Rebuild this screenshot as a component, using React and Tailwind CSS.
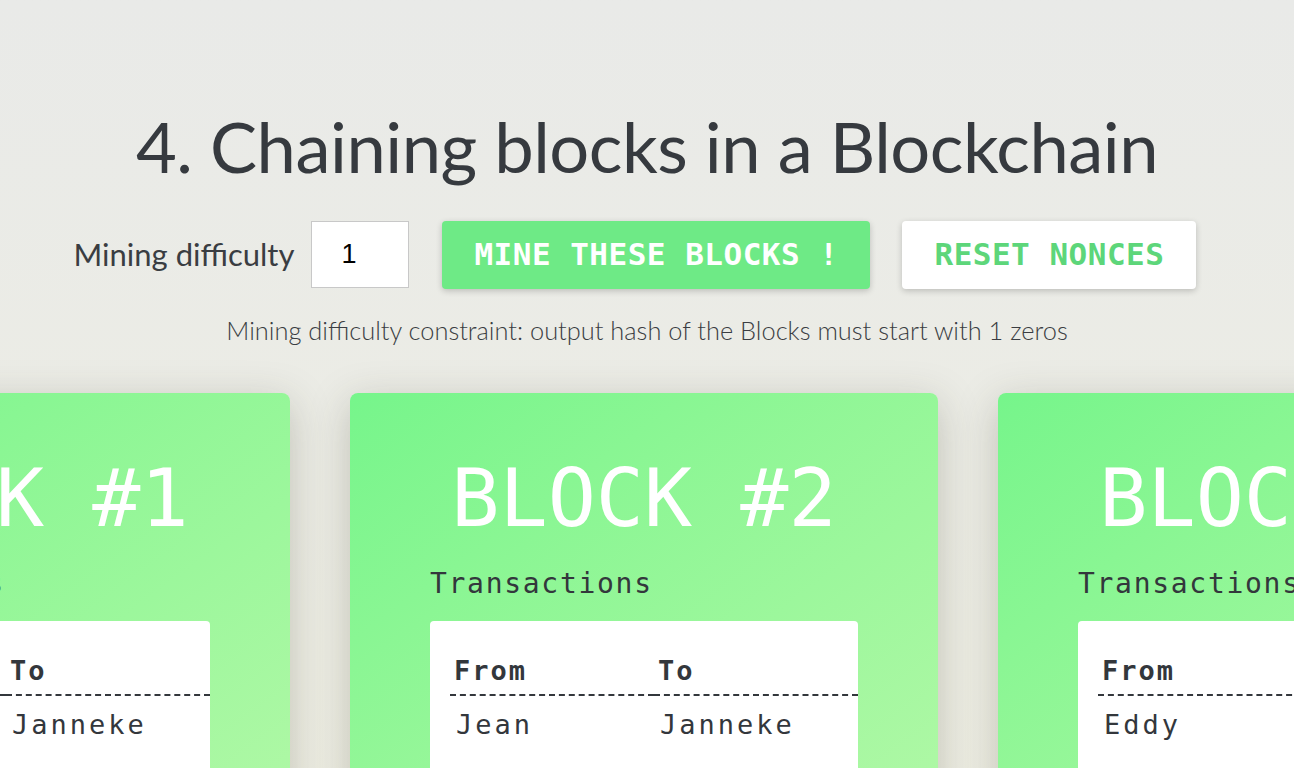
import React, { useState } from "react";

const blocks = [
  { id: 1, tx: [{ from: "Eddy", to: "Janneke" }] },
  { id: 2, tx: [{ from: "Jean", to: "Janneke" }] },
  { id: 3, tx: [{ from: "Eddy", to: "Jean" }] },
];

const mono = "font-['DejaVu_Sans_Mono','Liberation_Mono',monospace]";

function Block({ block }) {
  return (
    <div className="w-[588px] shrink-0 rounded-lg bg-gradient-to-br from-[#76f58b] to-[#b0f8a6] px-20 pt-[66px] pb-10 shadow-[0_10px_40px_rgba(60,60,40,0.25)]">
      <h2 className={`${mono} text-center text-[80px] font-light leading-none text-white`}>
        BLOCK #{block.id}
      </h2>
      <div className={`${mono} mt-[31px] text-[28px] leading-none tracking-[1.7px] text-[#33373c]`}>
        Transactions
      </div>
      <div className="mt-[23px] rounded bg-white pl-5 pt-[34px] pb-10">
        <table className={`${mono} w-full border-collapse text-[27px] text-[#33373c]`}>
          <thead>
            <tr>
              <th className="w-1/2 border-b-2 border-dashed border-[#33373c] pb-[7px] pl-1 text-left font-bold leading-8 tracking-[2px]">
                From
              </th>
              <th className="w-1/2 border-b-2 border-dashed border-[#33373c] pb-[7px] pl-1 text-left font-bold leading-8 tracking-[2px]">
                To
              </th>
            </tr>
          </thead>
          <tbody>
            {block.tx.map((t, i) => (
              <tr key={i}>
                <td className="pl-1.5 pt-[13px] leading-8 tracking-[3px]">{t.from}</td>
                <td className="pl-1.5 pt-[13px] leading-8 tracking-[3px]">{t.to}</td>
              </tr>
            ))}
          </tbody>
        </table>
      </div>
    </div>
  );
}

export default function App() {
  const [difficulty, setDifficulty] = useState("1");

  return (
    <div className="min-h-screen overflow-hidden bg-gradient-to-b from-[#e9eae8] to-[#eeeee3] font-['Lato','Noto_Sans',sans-serif] text-[#33373c]">
      <h1 className="pt-[111px] text-center text-[70.5px] font-normal leading-none tracking-[-0.5px] text-[#363a3f]">
        4. Chaining blocks in a Blockchain
      </h1>

      <div className="mt-[39px] flex items-center justify-center pr-[24px]">
        <label className="text-[31px] font-normal text-[#3a3d42]">Mining difficulty</label>
        <input
          value={difficulty}
          onChange={(e) => setDifficulty(e.target.value)}
          className="ml-[17px] h-[67px] w-[98px] border border-[#c8c8c8] bg-white px-[29px] font-['Liberation_Sans',sans-serif] text-[27px] text-black outline-none"
        />
        <button
          className={`${mono} ml-[33px] h-[68px] w-[428px] rounded bg-[#6eea86] text-[31px] font-bold tracking-[0.5px] text-white shadow-[0_2px_6px_rgba(0,0,0,0.2)]`}
        >
          MINE THESE BLOCKS !
        </button>
        <button
          className={`${mono} ml-8 h-[68px] w-[294px] rounded bg-white text-[31px] font-bold tracking-[0.5px] text-[#5dd67a] shadow-[0_2px_6px_rgba(0,0,0,0.2)]`}
        >
          RESET NONCES
        </button>
      </div>

      <p className="mt-[22px] text-center text-[25.4px] font-light text-[#3a3d42]">
        Mining difficulty constraint: output hash of the Blocks must start with {difficulty} zeros
      </p>

      <div className="mt-[44px] flex justify-center gap-[60px] pr-[6px]">
        {blocks.map((b) => (
          <Block key={b.id} block={b} />
        ))}
      </div>
    </div>
  );
}
